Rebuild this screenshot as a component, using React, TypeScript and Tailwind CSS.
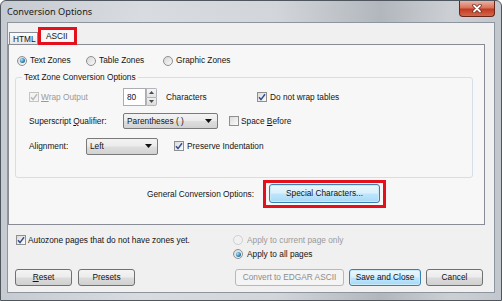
import { ReactNode } from "react";

const FONT = "font-['Liberation_Sans',Arial,sans-serif]";

function Check({ checked = false, disabled = false }: { checked?: boolean; disabled?: boolean }) {
  return (
    <span
      className={`flex h-[10px] w-[10px] shrink-0 items-center justify-center border ${
        disabled ? "border-[#c4c4c4] bg-[#f3f3f3]" : "border-[#8e8f8f] bg-[linear-gradient(135deg,#dcdcdc,#fbfbfb)]"
      }`}
    >
      {checked && (
        <svg width="8" height="8" viewBox="0 0 8 8">
          <path d="M1 4.2 L3 6.6 L7 1.2" fill="none" stroke={disabled ? "#b9b9b9" : "#34508e"} strokeWidth="1.5" />
        </svg>
      )}
    </span>
  );
}

function Radio({ on = false, disabled = false }: { on?: boolean; disabled?: boolean }) {
  return (
    <span
      className={`flex h-[10px] w-[10px] shrink-0 items-center justify-center rounded-full border ${
        disabled ? "border-[#d0d0d0] bg-[#f1f1f1]" : "border-[#8e8f8f] bg-[linear-gradient(135deg,#d6d6d6,#fafafa)]"
      }`}
    >
      {on && <span className="h-[5px] w-[5px] rounded-full bg-[radial-gradient(circle_at_35%_35%,#b4e6f7,#2f86b6_55%,#1a5480)]" />}
    </span>
  );
}

function Btn({ children, className = "", kind = "normal" }: { children: ReactNode; className?: string; kind?: "normal" | "default" | "disabled" }) {
  const STYLE = {
    normal: "border-[#707070] bg-[linear-gradient(180deg,#f4f4f4_0%,#ececec_48%,#dcdcdc_52%,#d0d0d0_100%)] text-[#111]",
    default: "border-[#3c7fb1] bg-[linear-gradient(180deg,#eaf6fd_0%,#d9f0fc_48%,#bee6fd_52%,#a7d9f5_100%)] text-[#111] shadow-[inset_0_0_0_1px_#c9e8f8]",
    disabled: "border-[#b6b9bc] bg-[#f4f4f4] text-[#8c8c8c]",
  };
  return (
    <div className={`flex shrink-0 items-center justify-center rounded-[3px] border ${STYLE[kind]} ${className}`}>
      {children}
    </div>
  );
}

function Combo({ value, className = "" }: { value: string; className?: string }) {
  return (
    <div
      className={`flex shrink-0 items-center justify-between rounded-[2px] border border-[#7a7a7a] bg-[linear-gradient(180deg,#f3f3f3_0%,#ebebeb_48%,#dedede_52%,#d2d2d2_100%)] pl-[3px] pr-[5px] ${className}`}
    >
      <span>{value}</span>
      <svg width="7" height="4" viewBox="0 0 7 4">
        <path d="M0 0 H7 L3.5 4 Z" fill="#111" />
      </svg>
    </div>
  );
}

export default function App() {
  return (
    <div
      className={`${FONT} flex h-[301px] w-[502px] flex-col overflow-hidden rounded-t-[6px] border border-[#50565d] bg-[linear-gradient(90deg,#c6cbd1_0%,#d8dce1_28%,#d2d6db_55%,#b2b7bd_76%,#ccd0d5_90%,#c2c7cd_100%)] text-[8.3px] leading-[11px] text-[#141414]`}
    >
      {/* title bar */}
      <div className="flex h-[21px] shrink-0 items-start justify-between">
        <span className="pl-[6px] pt-[5px] font-['Noto_Sans',Arial,sans-serif] text-[9.2px] leading-[12px] text-[#1a1a1a]">
          Conversion Options
        </span>
        <div className="mr-[6px] flex h-[16px] w-[36px] items-center justify-center rounded-b-[4px] border border-t-0 border-[#6a2418] bg-[linear-gradient(180deg,#eab3a5_0%,#d9735b_45%,#c23b20_55%,#d4664c_100%)]">
          <svg width="10" height="9" viewBox="0 0 10 9">
            <path d="M2 1.5 L8 7.5 M8 1.5 L2 7.5" stroke="#6d2a1e" strokeWidth="3.4" strokeLinecap="round" />
            <path d="M2 1.5 L8 7.5 M8 1.5 L2 7.5" stroke="#ffffff" strokeWidth="1.8" strokeLinecap="round" />
          </svg>
        </div>
      </div>

      {/* body */}
      <div className="flex flex-1 px-[6px] pb-[7px]">
        <div className="flex flex-1 flex-col border border-[#8d959e] bg-[#f0f0f0]">
          {/* tabs */}
          <div className="ml-[1px] mt-[4px] flex h-[18px] items-end">
            <div className="flex h-[13px] w-[29px] items-center border border-b-0 border-[#898c95] bg-[linear-gradient(180deg,#fdfdfd,#e4e4e4)] pl-[3px]">
              HTML
            </div>
            <div className="relative z-10 flex h-[18px] w-[39px] items-center border-[3px] border-[#e4111c] bg-[#f7f7f7] pl-[5px]">
              ASCII
            </div>
          </div>

          {/* tab panel */}
          <div className="-mt-[1px] flex h-[181px] w-[477px] flex-col border border-[#898c95] bg-[#f7f7f7]">
            <div className="mt-[10px] flex h-[11px] items-center pl-[8px]">
              <div className="flex w-[69px] items-center gap-[3px]">
                <Radio on />
                <span>Text Zones</span>
              </div>
              <div className="flex w-[77px] items-center gap-[3px]">
                <Radio />
                <span>Table Zones</span>
              </div>
              <div className="flex items-center gap-[3px]">
                <Radio />
                <span>Graphic Zones</span>
              </div>
            </div>

            <fieldset className="ml-[6px] mt-[5px] w-[458px] rounded-[3px] border border-[#d5dfe5] pb-[22px]">
              <legend className="ml-[6px] px-[2px] leading-[12px]">Text Zone Conversion Options</legend>

              <div className="mt-[5px] flex h-[18px] items-center pl-[13px]">
                <div className="flex w-[94px] items-center gap-[2px]">
                  <Check checked disabled />
                  <span className="text-[#9a9a9a]">
                    <span className="underline">W</span>rap Output
                  </span>
                </div>
                <div className="flex h-[18px] w-[23px] items-center border border-[#abadb3] bg-white pl-[3px]">80</div>
                <div className="flex h-[18px] w-[11px] flex-col">
                  <div className="flex flex-1 items-center justify-center rounded-tr-[2px] border border-b-0 border-[#b2b6ba] bg-[linear-gradient(180deg,#f6f6f6,#e3e3e3)]">
                    <svg width="5" height="3" viewBox="0 0 5 3">
                      <path d="M0 3 H5 L2.5 0 Z" fill="#4a4a4a" />
                    </svg>
                  </div>
                  <div className="flex flex-1 items-center justify-center rounded-br-[2px] border border-[#b2b6ba] bg-[linear-gradient(180deg,#f0f0f0,#dcdcdc)]">
                    <svg width="5" height="3" viewBox="0 0 5 3">
                      <path d="M0 0 H5 L2.5 3 Z" fill="#4a4a4a" />
                    </svg>
                  </div>
                </div>
                <span className="ml-[9px] w-[91px]">Characters</span>
                <div className="flex items-center gap-[3px]">
                  <Check checked />
                  <span>Do not wrap tables</span>
                </div>
              </div>

              <div className="mt-[6px] flex h-[18px] items-center pl-[13px]">
                <span className="w-[94px]">
                  Superscript <span className="underline">Q</span>ualifier:
                </span>
                <Combo value="Parentheses ( )" className="h-[16px] w-[95px]" />
                <div className="ml-[11px] flex items-center gap-[2px]">
                  <Check />
                  <span>
                    Space <span className="underline">B</span>efore
                  </span>
                </div>
              </div>

              <div className="mt-[7px] flex h-[18px] items-center pl-[13px]">
                <span className="w-[57px]">Alignment:</span>
                <Combo value="Left" className="h-[17px] w-[72px]" />
                <div className="ml-[16px] flex items-center gap-[3px]">
                  <Check checked />
                  <span>Preserve Indentation</span>
                </div>
              </div>
            </fieldset>

            <div className="mt-[2px] flex items-center pl-[138px]">
              <span className="w-[116px]">General Conversion Options:</span>
              <div className="h-[28px] w-[123px] border-[3px] border-[#e4111c] pl-[3px] pt-[1px]">
                <Btn kind="default" className="h-[19px] w-[111px]">
                  Special Characters...
                </Btn>
              </div>
            </div>
          </div>

          {/* below panel */}
          <div className="mt-[8px] flex">
            <div className="flex h-[14px] w-[225px] items-center gap-[2px] pl-[8px]">
              <Check checked />
              <span>Autozone pages that do not have zones yet.</span>
            </div>
            <div className="flex flex-col">
              <div className="flex h-[14px] items-center gap-[4px]">
                <Radio disabled />
                <span className="text-[#9a9a9a]">Apply to current page only</span>
              </div>
              <div className="flex h-[14px] items-center gap-[4px]">
                <Radio on />
                <span>Apply to all pages</span>
              </div>
            </div>
          </div>

          <div className="mt-[8px] flex h-[17px] pl-[7px]">
            <Btn className="w-[57px]">
              <span>
                <span className="underline">R</span>eset
              </span>
            </Btn>
            <Btn className="ml-[6px] w-[57px]">Presets</Btn>
            <Btn kind="disabled" className="ml-[100px] w-[109px]">
              Convert to EDGAR ASCII
            </Btn>
            <Btn kind="default" className="ml-[5px] w-[72px]">
              Save and Close
            </Btn>
            <Btn className="ml-[5px] w-[57px]">Cancel</Btn>
          </div>
        </div>
      </div>
    </div>
  );
}
